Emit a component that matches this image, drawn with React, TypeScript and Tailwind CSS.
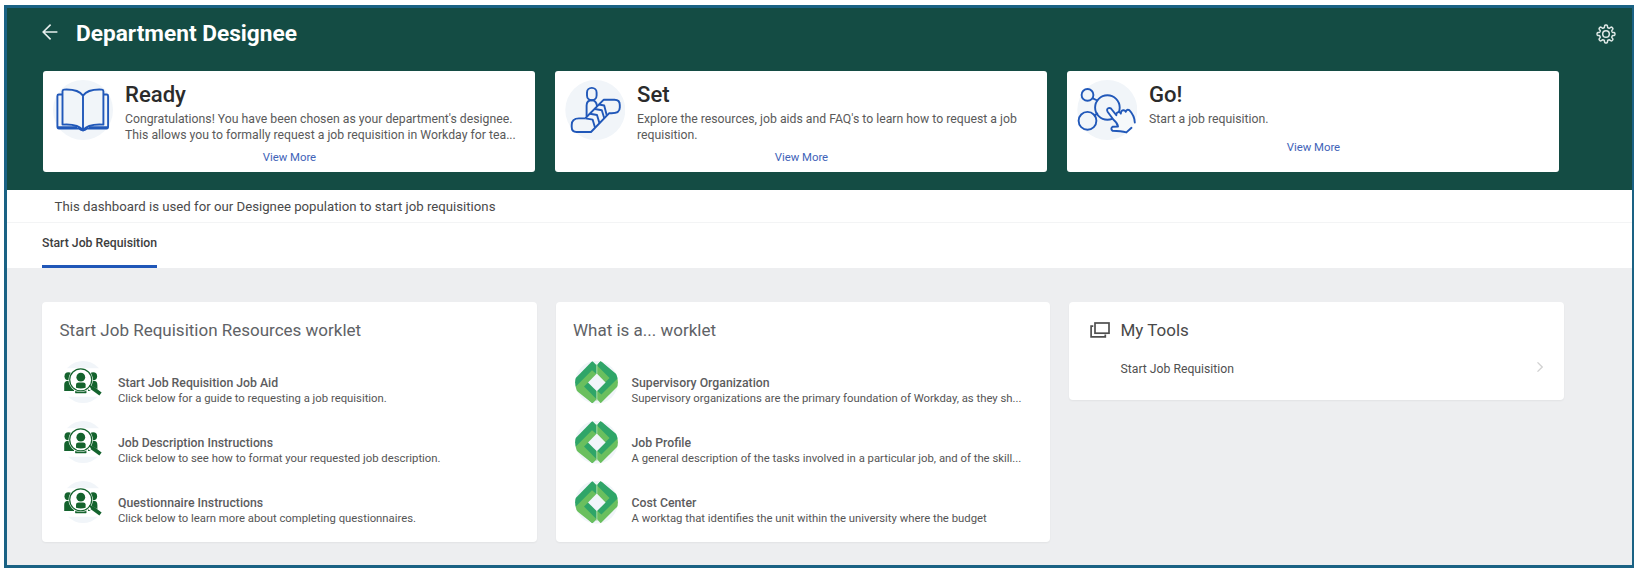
import type { ReactNode } from 'react';

interface Step {
  title: string;
  text: string;
  icon: ReactNode;
}

interface WorkletItem {
  title: string;
  text: string;
}

// Outline of the eight-toothed settings gear
const gearPath =
  Array.from({ length: 144 }, (_, i) => {
    const a = (i / 144) * Math.PI * 2;
    const r = 7.7 + 1.25 * Math.tanh(2.2 * Math.cos(8 * a));
    return `${i === 0 ? 'M' : 'L'}${(10 + r * Math.cos(a)).toFixed(2)} ${(10 + r * Math.sin(a)).toFixed(2)}`;
  }).join('') + 'Z';

function BookIcon() {
  return (
    <svg viewBox="0 0 60 60" className="h-[60px] w-[60px]" fill="none" stroke="#2158b9" strokeWidth="1.9" strokeLinejoin="round">
      <circle cx="30" cy="30" r="30" fill="#f1f5f9" stroke="none" />
      <path d="M9 14.5H5.9Q4.4 14.5 4.4 16V46.5Q4.4 48.6 6 48.6H26Q30 52 34 48.6H53.6Q55.1 48.6 55.1 46.5V16Q55.1 14.5 53.6 14.5H50.8" />
      <path d="M5 47.5H24M36 47.5H55" strokeWidth="2.6" />
      <path d="M30 15.6C26 10 19 9.2 11 9.6Q9.5 9.8 9.5 11.2V44.6C18 44 26 45 30 50.4C34 45 42 44 50.4 44.6V11.2Q50.4 9.8 49 9.6C41 9.2 34 10 30 15.6V50.4" />
    </svg>
  );
}

function EscalatorIcon() {
  return (
    <svg viewBox="0 0 60 60" className="h-[60px] w-[60px]" fill="none" stroke="#2158b9" strokeWidth="1.9" strokeLinejoin="round">
      <circle cx="30.3" cy="30" r="30" fill="#f1f5f9" stroke="none" />
      <rect x="22" y="7.9" width="9.6" height="12.4" rx="4.7" />
      <path d="M21.6 36V25.5Q21.6 20.3 26.9 20.3Q31.2 20.3 32 26" />
      <path d="M20.5 38L38.8 19.7H49.5Q54.8 19.7 54.8 25V27.5Q54.8 33.3 46.5 33.3H44L26 52H11.5Q6.7 52 6.7 47V45Q6.7 38.4 14 38.4H20.5" />
      <path d="M20.5 38.4L27.6 39.6L30 47.6M25 33.8L32 35L34.4 43M29.8 29L36.8 30.2L39.2 38M34 24.5L39.2 25.5L41.8 35.4" />
    </svg>
  );
}

function TouchIcon() {
  return (
    <svg viewBox="0 0 60 60" className="h-[60px] w-[60px]" fill="none" stroke="#2158b9" strokeWidth="1.9" strokeLinejoin="round" strokeLinecap="round">
      <circle cx="30.3" cy="30" r="30" fill="#f1f5f9" stroke="none" />
      <circle cx="10.5" cy="14.9" r="5.9" />
      <circle cx="30.4" cy="27.5" r="12.3" />
      <circle cx="10.5" cy="40.8" r="8.9" />
      <path d="M15.8 18.3L20.3 20.5M17.7 35.5L20.3 33.5" />
      <path
        d="M30.6 31.7Q29.4 28.7 32 28.2Q33.8 27.8 35.2 30L39.3 35.2Q39.4 31.8 42.3 32.2Q43.3 32.5 43.8 33.6Q44.2 29.8 47 30.3Q48.4 30.6 48.8 31.8Q49.6 28.9 52.3 30L54.2 32.4Q57.8 37 57.8 43.2L49.4 52.6Q44 50.8 35.5 50.7Q33.4 49.2 35.4 46.6L41 46.5Q40.4 42.5 36.5 39.8Z"
        fill="#f6f9fb"
        stroke="none"
      />
      <path d="M49.4 52.4Q44 50.8 35.5 50.7Q33.2 48.6 35.6 46.8L41 46.5Q40.4 42.8 36.5 39.8L30.6 31.7Q29.2 28.9 31.6 28.2Q33.6 27.6 35.2 30L39.3 35.2Q39.2 31.9 42 32.1Q43.3 32.3 43.8 33.6Q44.2 29.9 46.8 30.3Q48.3 30.5 48.8 31.8Q49.8 28.8 52.3 30.1Q57.6 35.6 57.8 42.5M54.5 47.8L49.4 52.4" />
    </svg>
  );
}

function PeopleSearchIcon() {
  return (
    <svg viewBox="0 0 42 42" className="ml-[0.7px] h-[42px] w-[42px]" fill="#14632d">
      <circle cx="21" cy="21" r="21" fill="#f1f5f9" />
      <path d="M0 7.3H42V35.8H0Z" fill="#ffffff" />
      <circle cx="6.4" cy="15.2" r="3.9" />
      <circle cx="31.2" cy="15.2" r="3.9" />
      <path d="M2.2 30V24Q2.2 19.8 6.5 19.8H12V30Z" />
      <path d="M26 30V19.8H31.5Q35.4 19.8 35.4 24V30Z" />
      <path d="M13.2 28H24.4V31.8H13.2Z" />
      <circle cx="18.7" cy="18.8" r="12.2" fill="#ffffff" />
      <circle cx="18.7" cy="18.8" r="11" fill="none" stroke="#14632d" strokeWidth="1.2" />
      <circle cx="18.8" cy="16.2" r="4.4" />
      <path d="M14 26.8V23.6Q14 21.4 16.5 21.4H21.2Q23.6 21.4 23.6 23.6V26.8Q18.8 28.2 14 26.8Z" />
      <path d="M13.4 31.6H24.2" stroke="#14632d" strokeWidth="1.3" />
      <path d="M27.5 26.3L38.3 32.6" stroke="#ffffff" strokeWidth="5" />
      <path d="M27.3 24.7L30.5 26.8" stroke="#14632d" strokeWidth="2" />
      <path d="M29.6 26.4L38.5 33" stroke="#14632d" strokeWidth="3.8" />
    </svg>
  );
}

function DiamondIcon() {
  return (
    <svg viewBox="0 0 43 43" className="h-[43px] w-[43px]">
      <defs>
        <clipPath id="diamond-clip">
          <circle cx="21.5" cy="21.3" r="21.4" />
        </clipPath>
      </defs>
      <g clipPath="url(#diamond-clip)">
        <rect width="43" height="43" fill="#f1f5f9" />
        <path d="M17.3 0L21.8 4.6V38L17.3 42.2L-3.6 21.3Z" fill="#2fa568" />
        <path d="M17 9.2L21.8 13.2L9 25.6L21.6 38.2L17.3 42.2L-3.6 25.6H0.8Z" fill="#6abf5e" />
        <path d="M25.7 0L21.8 4.6V38L25.7 42.2L46.6 21.3Z" fill="#6abf5e" />
        <path d="M25.7 0L21.8 4.2L34.6 17L21.8 29.6L26.4 33.6L42.6 17.4L46 17Z" fill="#2fa568" />
        <path d="M21.8 12.6L30.6 21.4L21.8 30.2L13 21.4Z" fill="#f1f5f9" />
        <path d="M21.9 3V12.8M21.9 30V40" stroke="#a8dba8" strokeWidth="0.9" />
      </g>
    </svg>
  );
}

const steps: Step[] = [
  {
    title: 'Ready',
    text: "Congratulations! You have been chosen as your department's designee. This allows you to formally request a job requisition in Workday for tea...",
    icon: <BookIcon />,
  },
  {
    title: 'Set',
    text: "Explore the resources, job aids and FAQ's to learn how to request a job requisition.",
    icon: <EscalatorIcon />,
  },
  { title: 'Go!', text: 'Start a job requisition.', icon: <TouchIcon /> },
];

const resources: WorkletItem[] = [
  { title: 'Start Job Requisition Job Aid', text: 'Click below for a guide to requesting a job requisition.' },
  { title: 'Job Description Instructions', text: 'Click below to see how to format your requested job description.' },
  { title: 'Questionnaire Instructions', text: 'Click below to learn more about completing questionnaires.' },
];

const definitions: WorkletItem[] = [
  { title: 'Supervisory Organization', text: 'Supervisory organizations are the primary foundation of Workday, as they sh...' },
  { title: 'Job Profile', text: 'A general description of the tasks involved in a particular job, and of the skill...' },
  { title: 'Cost Center', text: 'A worktag that identifies the unit within the university where the budget' },
];

function StepCard({ step }: { step: Step }) {
  return (
    <div className="h-[101px] w-[492px] rounded-[3px] bg-white pt-[11px]">
      <div className="flex">
        <div className="-mt-[1.5px] ml-[10px] h-[60px] w-[60px] shrink-0">{step.icon}</div>
        <div className="-mb-5 ml-[12px] w-[396px]">
          <h2 className="text-[22.1px] font-medium leading-[25.4px] text-[#2b2b2b]">{step.title}</h2>
          <p className="mt-[4.6px] min-h-[21px] text-[12.26px] leading-[15.7px] text-[#5a5a5a]">{step.text}</p>
          <a className="mt-[6px] -ml-[81.6px] block w-[492px] text-center text-[11.35px] leading-4 text-[#4163b8]">View More</a>
        </div>
      </div>
    </div>
  );
}

function Worklet({ title, items, icon }: { title: string; items: WorkletItem[]; icon: ReactNode }) {
  return (
    <section className="h-[240px] w-[494.5px] rounded bg-white pt-[18.5px] shadow-[0_1px_2px_rgba(0,0,0,0.05)]">
      <h2 className="ml-[17.5px] text-[17px] leading-5 text-[#606266]">{title}</h2>
      <ul className="mt-5">
        {items.map((item) => (
          <li key={item.title} className="flex h-[59.8px]">
            <div className="ml-[19px] mt-[0.8px] w-[57px] shrink-0">{icon}</div>
            <div className="whitespace-nowrap pt-[14.8px]">
              <h3 className="text-[12.27px] font-medium leading-4 text-[#5c5c5e]">{item.title}</h3>
              <p className="text-[11.32px] leading-[15.6px] text-[#555]">{item.text}</p>
            </div>
          </li>
        ))}
      </ul>
    </section>
  );
}

export default function App() {
  return (
    <div className="h-[574px] w-[1639px] overflow-hidden bg-white pl-1 pt-[5px] font-['Roboto',sans-serif]">
      <div className="h-[563px] w-[1630px] border-[3px] border-r-2 border-[#1a6284] bg-[#edeef0]">
        <header className="h-[182.3px] bg-[#144c44]">
          <div className="flex h-[62.8px] items-start pt-[14px]">
            <svg viewBox="0 0 16 16" className="ml-[35px] mt-[2px] h-4 w-4" fill="none" stroke="#e6eeed" strokeWidth="1.6">
              <path d="M15.4 8H1.2M8.6 0.6L1.2 8L8.6 15.4" />
            </svg>
            <h1 className="ml-[18px] text-[22.67px] font-bold leading-6 text-white">Department Designee</h1>
            <svg viewBox="0 0 20 20" className="ml-auto mr-[16.5px] mt-[2px] h-5 w-5" fill="none" stroke="#dfe9e7" strokeWidth="1.5">
              <path d={gearPath} />
              <circle cx="10" cy="10" r="3.3" />
            </svg>
          </div>
          <div className="ml-9 flex gap-5">
            {steps.map((step) => (
              <StepCard key={step.title} step={step} />
            ))}
          </div>
        </header>

        <p className="h-[32.4px] border-b border-[#f3f4f5] bg-white pl-[47.6px] text-[13.21px] leading-[33.5px] text-[#4a4a4a]">
          This dashboard is used for our Designee population to start job requisitions
        </p>
        <nav className="flex h-[45px] bg-white pl-[35px]">
          <span className="border-b-[3.5px] border-[#2057b8] pt-[12px] text-[12.26px] font-medium leading-4 text-[#3d3d3d]">
            Start Job Requisition
          </span>
        </nav>

        <main className="flex items-start gap-[19px] pl-[35px] pt-[34.3px]">
          <Worklet title="Start Job Requisition Resources worklet" items={resources} icon={<PeopleSearchIcon />} />
          <Worklet title="What is a... worklet" items={definitions} icon={<DiamondIcon />} />
          <section className="h-[98px] w-[495px] rounded bg-white pt-[18.5px] shadow-[0_1px_2px_rgba(0,0,0,0.05)]">
            <div className="flex">
              <svg viewBox="0 0 20 16" className="ml-[20.5px] mt-[1.5px] h-4 w-5" fill="none" stroke="#4f4f4f" strokeWidth="1.7">
                <rect x="5" y="1" width="14" height="10.2" />
                <path d="M3.3 4.2H1.1V14.8H15.3V12.6" />
              </svg>
              <h2 className="ml-[11px] text-[17px] leading-5 text-[#494949]">My Tools</h2>
            </div>
            <div className="ml-[51.5px] mr-[21px] mt-[20.6px] flex items-center justify-between">
              <span className="text-[12.21px] leading-4 text-[#505050]">Start Job Requisition</span>
              <svg viewBox="0 0 6 10" className="-mt-[4px] h-2.5 w-1.5" fill="none" stroke="#d2d2d2" strokeWidth="1.3">
                <path d="M0.5 0.4L5.2 5L0.5 9.6" />
              </svg>
            </div>
          </section>
        </main>
      </div>
    </div>
  );
}
